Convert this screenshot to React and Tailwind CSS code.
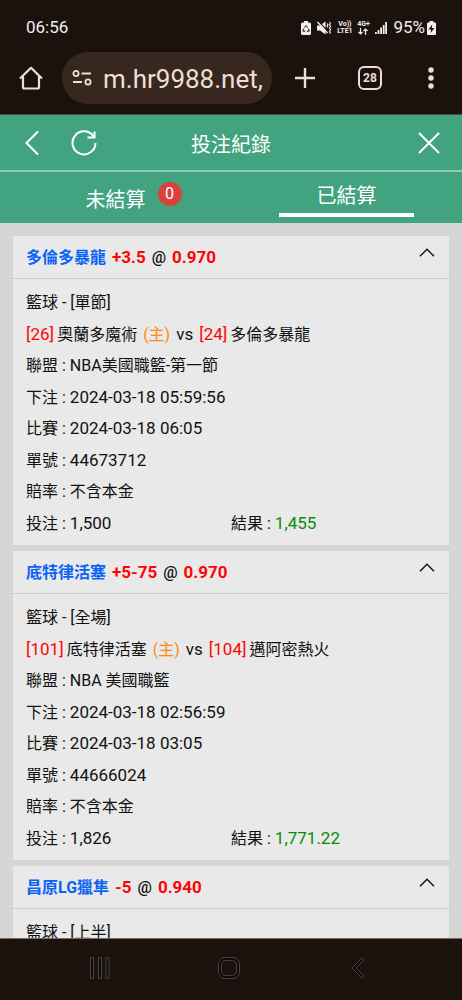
import React, { useState } from "react";

const bets = [
  {
    id: "44673712",
    pick: "多倫多暴龍",
    handicap: "+3.5",
    odds: "0.970",
    type: "籃球 - [單節]",
    home: { no: "[26]", name: "奧蘭多魔術" },
    away: { no: "[24]", name: "多倫多暴龍" },
    league: "NBA美國職籃-第一節",
    betTime: "2024-03-18 05:59:56",
    gameTime: "2024-03-18 06:05",
    stake: "1,500",
    result: "1,455",
  },
  {
    id: "44666024",
    pick: "底特律活塞",
    handicap: "+5-75",
    odds: "0.970",
    type: "籃球 - [全場]",
    home: { no: "[101]", name: "底特律活塞" },
    away: { no: "[104]", name: "邁阿密熱火" },
    league: "NBA 美國職籃",
    betTime: "2024-03-18 02:56:59",
    gameTime: "2024-03-18 03:05",
    stake: "1,826",
    result: "1,771.22",
  },
  {
    id: "3",
    pick: "昌原LG獵隼",
    handicap: "-5",
    odds: "0.940",
    type: "籃球 - [上半]",
  },
];

const StatusBar = () => (
  <div className="flex h-[52px] shrink-0 items-center justify-between px-[26px] pt-[3px] text-[17px] text-[#f1efed]">
    <span>06:56</span>
    <div className="flex items-center">
      {/* Battery saver */}
      <svg className="mr-[6px] h-[14px] w-[10px]" viewBox="0 0 10 14">
        <path d="M3 0h4v1.5h1.5A1.5 1.5 0 0 1 10 3v9.5A1.5 1.5 0 0 1 8.500 14h-7A1.500 1.500 0 0 1 0 12.500V3a1.500 1.500 0 0 1 1.500-1.500H3z" fill="currentColor" />
        <path d="M3.400 6.600 5 4.600l1.600 2M7.400 7.600l.9 2.600H6M4.400 10.200H1.900l.8-2.600" fill="none" stroke="#1b120d" strokeWidth="1" />
      </svg>
      {/* Muted with vibration */}
      <svg className="mr-[5px] h-[14px] w-[14px]" viewBox="0 0 14 14">
        <path d="M0 4.500h3L8.500.500v13L3 9.500H0z" fill="currentColor" />
        <path d="M1.500.500 11 10.500" stroke="#1b120d" strokeWidth="1.200" />
        <path d="M.500 1 10.500 12" stroke="currentColor" strokeWidth="1.400" />
        <path d="m10 2.500 1 1.200-1 1.300 1 1.500M12.500 1l1 1.500-1 1.500 1 1.500-1 1.500 1 1.500-1 1.500 1 1.500-1 1" fill="none" stroke="currentColor" strokeWidth="1.100" />
      </svg>
      <span className="mr-[3px] flex w-[17px] flex-col items-center text-[7px] font-bold leading-[7px]">
        <span>Vo))</span>
        <span>LTE1</span>
      </span>
      <span className="mr-[5px] flex w-[14px] flex-col items-center text-[7px] font-bold leading-[7px]">
        <span>4G+</span>
        <svg className="h-[7px] w-[10px]" viewBox="0 0 10 7" fill="none" stroke="currentColor" strokeWidth="1.200">
          <path d="M2.500 0v6M.500 4l2 2 2-2M7.500 7V1M5.500 3l2-2 2 2" />
        </svg>
      </span>
      <svg className="mr-[6px] h-[12px] w-[12px]" viewBox="0 0 12 12" fill="currentColor">
        <path d="M0 10h1.800v2H0zM2.600 8h1.800v4H2.600zM5.200 5.500H7V12H5.200zM7.800 3h1.800v9H7.800zM10.200 0H12v12h-1.800z" />
      </svg>
      <span>95%</span>
      <svg className="ml-[2px] h-[14px] w-[9px]" viewBox="0 0 9 14">
        <path d="M2.500 0h4v1.500H8a1 1 0 0 1 1 1V13a1 1 0 0 1-1 1H1a1 1 0 0 1-1-1V2.500a1 1 0 0 1 1-1h1.500z" fill="currentColor" />
        <path d="M5.200 3.500 1.500 8.500h2.600L3.600 12l3.900-5H4.900z" fill="#1b120d" />
      </svg>
    </div>
  </div>
);

const BrowserBar = () => (
  <div className="flex shrink-0 items-center border-b border-[#5a4a42] pb-[10px] pl-[19px] pr-[25px] text-[#eedfd6]">
    <button aria-label="Home" className="mr-[19px]">
      <svg className="h-6 w-6" viewBox="0 0 24 24" fill="none" stroke="currentColor" strokeWidth="2.200">
        <path d="M1 12.500 12 1.800 23 12.500M4 10.500V21a1.500 1.500 0 0 0 1.500 1.500h13A1.500 1.500 0 0 0 20 21V10.500" strokeLinejoin="round" />
      </svg>
    </button>
    <div className="flex h-[52px] min-w-0 flex-1 items-center overflow-hidden rounded-full bg-[#38271f] pl-[10px] pr-[9px]">
      <svg className="mr-[11px] h-4 w-5 shrink-0" viewBox="0 0 20 16" fill="none" stroke="currentColor" strokeWidth="1.800">
        <circle cx="4" cy="3.500" r="2.600" />
        <path d="M9.500 3.500H19M1 12h9" />
        <circle cx="16" cy="12" r="2.600" />
      </svg>
      <span className="whitespace-nowrap pt-0.5 text-[26px]">m.hr9988.net,</span>
    </div>
    <button aria-label="New tab" className="ml-[22px]">
      <svg className="h-[22px] w-[22px]" viewBox="0 0 22 22" stroke="currentColor" strokeWidth="2.400">
        <path d="M11 1v20M1 11h20" />
      </svg>
    </button>
    <button
      aria-label="Tabs"
      className="ml-[42px] flex h-6 w-6 items-center justify-center rounded-[6px] border-2 border-[#eedfd6] text-xs font-bold"
    >
      28
    </button>
    <button aria-label="Menu" className="ml-[43px]">
      <svg className="h-[22px] w-3" viewBox="0 0 12 22" fill="currentColor">
        <circle cx="6" cy="3" r="2.700" />
        <circle cx="6" cy="11" r="2.700" />
        <circle cx="6" cy="19" r="2.700" />
      </svg>
    </button>
  </div>
);

const PageHeader = () => (
  <header className="grid h-[57px] shrink-0 grid-cols-3 items-center border-b-2 border-[#93cab5] px-[22px] text-white">
    <div className="flex items-center gap-[29px]">
      <button aria-label="返回">
        <svg className="h-[26px] w-[20px]" viewBox="0 0 20 26" fill="none" stroke="currentColor" strokeWidth="2">
          <path d="M16 1.500 4.500 13 16 24.500" />
        </svg>
      </button>
      <button aria-label="重新整理">
        <svg className="h-[26px] w-[26px]" viewBox="0 0 26 26" fill="none" stroke="currentColor" strokeWidth="2">
          <path d="M22.800 6.800A11.500 11.500 0 1 0 24.500 13" />
          <path d="M23.500 1.500v6h-7" />
        </svg>
      </button>
    </div>
    <h1 className="pt-1 text-center text-xl">投注紀錄</h1>
    <button aria-label="關閉" className="justify-self-end">
      <svg className="h-[22px] w-[22px]" viewBox="0 0 22 22" fill="none" stroke="currentColor" strokeWidth="2">
        <path d="m1 1 20 20M21 1 1 21" />
      </svg>
    </button>
  </header>
);

const Tabs = () => (
  <nav className="grid h-[51px] shrink-0 grid-cols-2 text-xl leading-7 text-white">
    <button className="flex items-center justify-center pt-1">
      <span className="relative">
        未結算
        <span className="absolute -top-1 left-full ml-3 flex h-6 w-6 items-center justify-center rounded-full bg-[#dc403b] text-base">
          0
        </span>
      </span>
    </button>
    <button className="flex flex-col items-center justify-end pb-[6px]">
      <span className="mb-[3px]">已結算</span>
      <span className="h-1 w-[135px] bg-white" />
    </button>
  </nav>
);

const Row = ({ children }) => (
  <div className="flex h-8 items-center whitespace-pre even:h-[31px]">{children}</div>
);

const Field = ({ label, children }) => (
  <>
    <span>{label} : </span>
    <span className="text-[17px]">{children}</span>
  </>
);

const BetCard = ({ bet }) => {
  const [open, setOpen] = useState(true);

  return (
    <section className="bg-[#e9e9e9]">
      <div className="flex h-[43px] items-center justify-between border-b border-[#cacaca] pl-[13px] pr-[14px] font-bold">
        <h2 className="flex items-center gap-[6px] pt-0.5">
          <span className="text-[#0b63f6]">{bet.pick}</span>
          <span className="text-[17px] text-[#fb0505]">{bet.handicap}</span>
          <span className="font-medium">@</span>
          <span className="text-[17px] text-[#fb0505]">{bet.odds}</span>
        </h2>
        <button aria-label="收合" onClick={() => setOpen(!open)} className="pb-[10px]">
          <svg className="h-[9px] w-4" viewBox="0 0 16 9" fill="none" stroke="currentColor" strokeWidth="1.400">
            <path d="M1 8.200 8 1.200l7 7" />
          </svg>
        </button>
      </div>

      {open && (
        <div className="px-[13px] pb-[6px] pt-2">
          <Row>{bet.type}</Row>
          {bet.home && (
            <>
              <Row>
                <span className="mr-[3px] text-[17px] text-[#fb0505]">{bet.home.no}</span>
                <span>{bet.home.name}</span>
                <span className="mx-[6px] text-[#fb8c10]">(主)</span>
                <span className="text-[17px]">vs</span>
                <span className="ml-[6px] mr-[3px] text-[17px] text-[#fb0505]">{bet.away.no}</span>
                <span>{bet.away.name}</span>
              </Row>
              <Row>聯盟 : {bet.league}</Row>
              <Row>
                <Field label="下注">{bet.betTime}</Field>
              </Row>
              <Row>
                <Field label="比賽">{bet.gameTime}</Field>
              </Row>
              <Row>
                <Field label="單號">{bet.id}</Field>
              </Row>
              <Row>賠率 : 不含本金</Row>
              <Row>
                <div className="flex w-1/2 items-center">
                  <Field label="投注">{bet.stake}</Field>
                </div>
                <div className="flex w-1/2 items-center">
                  <Field label="結果">
                    <span className="text-[#078c07]">{bet.result}</span>
                  </Field>
                </div>
              </Row>
            </>
          )}
        </div>
      )}
    </section>
  );
};

const SystemNav = () => (
  <div className="grid h-[62px] shrink-0 grid-cols-3 items-center border-t border-[#746f6b] bg-[#1b120d] pb-[4px] pl-[35px] pr-[39px] text-[#4b4541]">
    <button aria-label="Recents" className="justify-self-center">
      <svg className="h-[22px] w-[22px]" viewBox="0 0 22 22" fill="#100a07" stroke="currentColor" strokeWidth="1">
        <rect x="1.500" y="1" width="3" height="20" />
        <rect x="9.500" y="1" width="3" height="20" />
        <rect x="17" y="1" width="3" height="20" />
      </svg>
    </button>
    <button aria-label="Home screen" className="justify-self-center">
      <svg className="h-[22px] w-[22px]" viewBox="0 0 22 22" fill="none" stroke="currentColor" strokeWidth="1">
        <rect x=".5" y=".5" width="21" height="21" rx="6.500" fill="#100a07" />
        <rect x="3.500" y="3.500" width="15" height="15" rx="4" fill="#1b120d" />
      </svg>
    </button>
    <button aria-label="Back" className="justify-self-center">
      <svg className="h-[22px] w-[14px]" viewBox="0 0 14 22" fill="#100a07" stroke="currentColor" strokeWidth="1">
        <path d="M11 1 1 11l10 10 2-2-8-8 8-8z" strokeLinejoin="round" />
      </svg>
    </button>
  </div>
);

const App = () => {
  return (
    <div className="flex h-screen flex-col overflow-hidden bg-[#d6d6d6] font-['Roboto','Noto_Sans_CJK_TC',sans-serif] text-base text-[#111111]">
      <div className="shrink-0 bg-[#1b120d]">
        <StatusBar />
        <BrowserBar />
      </div>
      <div className="shrink-0 bg-[#41a37f]">
        <PageHeader />
        <Tabs />
      </div>
      <main className="flex min-h-0 flex-1 flex-col gap-[6px] overflow-hidden px-[13px] pt-[13px]">
        {bets.map((bet) => (
          <BetCard key={bet.id} bet={bet} />
        ))}
      </main>
      <SystemNav />
    </div>
  );
};

export default App;
